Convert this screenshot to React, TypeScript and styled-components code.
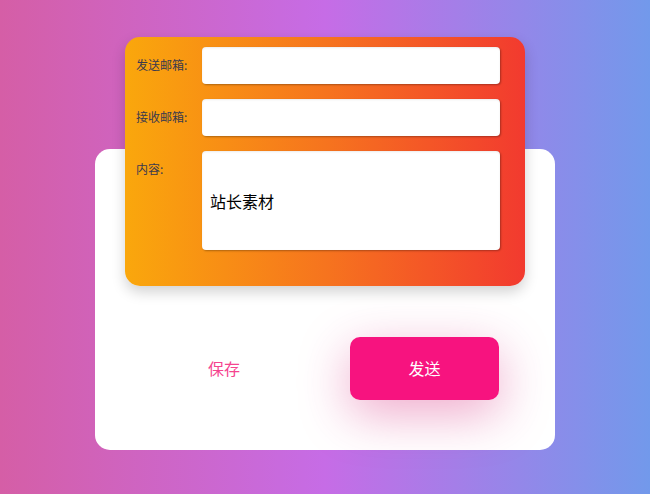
import React from 'react';
import styled, { createGlobalStyle } from 'styled-components';

const GlobalStyle = createGlobalStyle`
  html, body {
    margin: 0;
    padding: 0;
  }
  body {
    font-family: "Microsoft YaHei", "Noto Sans CJK SC", "Liberation Sans", sans-serif;
  }
`;

const Page = styled.div`
  width: 650px;
  height: 494px;
  background: linear-gradient(90deg, #d55ea6 0%, #c66ce6 50%, #7299eb 100%);
  display: flex;
  justify-content: center;
  padding-top: 37px;
  box-sizing: border-box;
`;

const Stack = styled.div`
  width: 460px;
  display: flex;
  flex-direction: column;
  align-items: center;
`;

const FormCard = styled.form`
  position: relative;
  z-index: 2;
  width: 400px;
  box-sizing: border-box;
  padding: 10px 25px 36px 11px;
  border-radius: 15px;
  background: linear-gradient(90deg, #faa70c 0%, #f6741e 50%, #f23a2f 100%);
  box-shadow: 0 6px 14px rgba(0, 0, 0, 0.18);
  display: flex;
  flex-direction: column;
  gap: 15px;
`;

const Row = styled.label`
  display: flex;
  align-items: flex-start;
`;

const Label = styled.span`
  width: 66px;
  flex-shrink: 0;
  padding-top: 9px;
  font-size: 12px;
  color: #3a3a4e;
  white-space: nowrap;
`;

const Input = styled.input`
  flex: 1;
  height: 37px;
  box-sizing: border-box;
  border: none;
  border-radius: 4px;
  background: #fff;
  box-shadow: 1px 1px 2px rgba(0, 0, 0, 0.3), inset 0 1px 2px rgba(0, 0, 0, 0.08);
  outline: none;
`;

const TextArea = styled.textarea`
  flex: 1;
  height: 99px;
  box-sizing: border-box;
  border: none;
  border-radius: 4px;
  padding: 38px 8px 0;
  resize: none;
  background: #fff;
  box-shadow: 1px 1px 2px rgba(0, 0, 0, 0.3), inset 0 1px 2px rgba(0, 0, 0, 0.08);
  font-family: "Microsoft YaHei", "Noto Sans CJK SC", sans-serif;
  font-size: 16px;
  color: #000;
  outline: none;
`;

const BaseCard = styled.div`
  width: 460px;
  height: 301px;
  margin-top: -137px;
  box-sizing: border-box;
  padding: 137px 56px 0 90px;
  background: #fff;
  border-radius: 15px;
  display: flex;
  align-items: center;
  justify-content: space-between;
`;

const SaveButton = styled.button`
  border: none;
  background: none;
  padding: 0;
  width: 78px;
  font-family: "Microsoft YaHei", "Noto Sans CJK SC", sans-serif;
  font-size: 16px;
  color: #f5448f;
  cursor: pointer;
`;

const SendButton = styled.button`
  width: 149px;
  height: 63px;
  border: none;
  border-radius: 10px;
  background: #f7137f;
  color: #fff;
  font-family: "Microsoft YaHei", "Noto Sans CJK SC", sans-serif;
  font-size: 16px;
  box-shadow: 0 14px 50px rgba(215, 40, 125, 0.4);
  cursor: pointer;
`;

export default function App() {
  return (
    <>
      <GlobalStyle />
      <Page>
        <Stack>
          <FormCard>
            <Row>
              <Label>发送邮箱:</Label>
              <Input type="text" />
            </Row>
            <Row>
              <Label>接收邮箱:</Label>
              <Input type="text" />
            </Row>
            <Row>
              <Label>内容:</Label>
              <TextArea defaultValue="站长素材" />
            </Row>
          </FormCard>
          <BaseCard>
            <SaveButton type="button">保存</SaveButton>
            <SendButton type="button">发送</SendButton>
          </BaseCard>
        </Stack>
      </Page>
    </>
  );
}
